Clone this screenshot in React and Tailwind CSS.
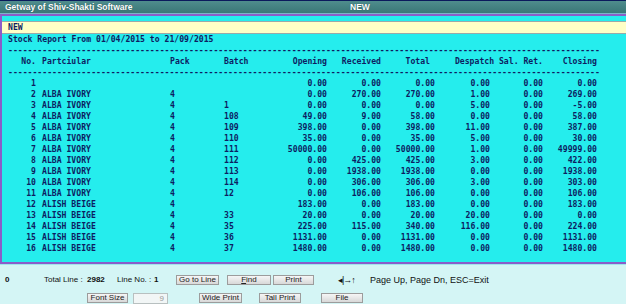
import React from "react";

const rows = [
  ["1", "", "", "", "0.00", "0.00", "0.00", "0.00", "0.00", "0.00"],
  ["2", "ALBA IVORY", "4", "", "0.00", "270.00", "270.00", "1.00", "0.00", "269.00"],
  ["3", "ALBA IVORY", "4", "1", "0.00", "0.00", "0.00", "5.00", "0.00", "-5.00"],
  ["4", "ALBA IVORY", "4", "108", "49.00", "9.00", "58.00", "0.00", "0.00", "58.00"],
  ["5", "ALBA IVORY", "4", "109", "398.00", "0.00", "398.00", "11.00", "0.00", "387.00"],
  ["6", "ALBA IVORY", "4", "110", "35.00", "0.00", "35.00", "5.00", "0.00", "30.00"],
  ["7", "ALBA IVORY", "4", "111", "50000.00", "0.00", "50000.00", "1.00", "0.00", "49999.00"],
  ["8", "ALBA IVORY", "4", "112", "0.00", "425.00", "425.00", "3.00", "0.00", "422.00"],
  ["9", "ALBA IVORY", "4", "113", "0.00", "1938.00", "1938.00", "0.00", "0.00", "1938.00"],
  ["10", "ALBA IVORY", "4", "114", "0.00", "306.00", "306.00", "3.00", "0.00", "303.00"],
  ["11", "ALBA IVORY", "4", "12", "0.00", "106.00", "106.00", "0.00", "0.00", "106.00"],
  ["12", "ALISH BEIGE", "4", "", "183.00", "0.00", "183.00", "0.00", "0.00", "183.00"],
  ["13", "ALISH BEIGE", "4", "33", "20.00", "0.00", "20.00", "20.00", "0.00", "0.00"],
  ["14", "ALISH BEIGE", "4", "35", "225.00", "115.00", "340.00", "116.00", "0.00", "224.00"],
  ["15", "ALISH BEIGE", "4", "36", "1131.00", "0.00", "1131.00", "0.00", "0.00", "1131.00"],
  ["16", "ALISH BEIGE", "4", "37", "1480.00", "0.00", "1480.00", "0.00", "0.00", "1480.00"],
];

const DASHES = "-".repeat(121);

function Btn({ children, w }) {
  return (
    <div
      className={`${w} h-[10px] border border-[#9c9c9c] bg-gradient-to-b from-[#f6f6f6] to-[#d8d8d8] flex items-center justify-center text-[8px] leading-[8px] text-[#222]`}
    >
      {children}
    </div>
  );
}

export default function App() {
  return (
    <div className="w-[626px] h-[304px] overflow-hidden flex flex-col bg-[#d4f5f5]">
      {/* title bar */}
      <div className="h-[13px] shrink-0 border-t border-[#0b1a5c] bg-gradient-to-b from-[#4f8d8d] to-[#3a7777] flex items-center text-white font-bold text-[8.5px] leading-[12px] [font-family:'Liberation_Sans',Arial,sans-serif] [text-shadow:0_0_1px_#1d4a4a]">
        <span className="ml-[5px] w-[345px]">Getway of Shiv-Shakti Software</span>
        <span>NEW</span>
      </div>
      <div className="h-[1px] shrink-0 bg-[#7bb3c8]" />
      <div className="h-[2px] shrink-0 bg-[#8a5dc9]" />

      {/* main cyan area */}
      <div className="h-[246px] shrink-0 bg-[#25eded] border-l-2 border-[#8a5dc9] flex flex-col pt-[5px] text-[#0d1d62] font-bold text-[8.13px] leading-[11px] [font-family:'DejaVu_Sans_Mono',monospace]">
        <div className="h-[13px] bg-[#ffffc6] border-y border-[#9aa9a9] flex items-center pl-[6px]">
          NEW
        </div>
        <div className="h-[11px] pl-[6px] whitespace-pre">Stock Report From 01/04/2015 to 21/09/2015</div>
        <div className="h-[11px] pl-[6px] w-[597px] overflow-hidden whitespace-pre">{DASHES}</div>
        <div className="h-[11px] flex whitespace-pre">
          <div className="w-[34px] text-right">No.</div>
          <div className="ml-[6px] w-[128px]">Partciular</div>
          <div className="w-[54px]">Pack</div>
          <div className="w-[48px]">Batch</div>
          <div className="w-[55px] text-right">Opening</div>
          <div className="w-[54px] text-right">Received</div>
          <div className="w-[54px] text-right pr-[5px]">Total</div>
          <div className="w-[108px] text-right">Despatch Sal. Ret.</div>
          <div className="w-[54px] text-right">Closing</div>
        </div>
        <div className="h-[11px] pl-[6px] w-[597px] overflow-hidden whitespace-pre">{DASHES}</div>
        {rows.map((r) => (
          <div key={r[0]} className="h-[11px] flex whitespace-pre">
            <div className="w-[34px] text-right">{r[0]}</div>
            <div className="ml-[6px] w-[128px]">{r[1]}</div>
            <div className="w-[54px]">{r[2]}</div>
            <div className="w-[48px]">{r[3]}</div>
            <div className="w-[55px] text-right">{r[4]}</div>
            <div className="w-[54px] text-right">{r[5]}</div>
            <div className="w-[54px] text-right">{r[6]}</div>
            <div className="w-[55px] text-right">{r[7]}</div>
            <div className="w-[53px] text-right">{r[8]}</div>
            <div className="w-[54px] text-right">{r[9]}</div>
          </div>
        ))}
      </div>
      <div className="h-[2px] shrink-0 bg-[#8a5dc9]" />
      <div className="h-[1px] shrink-0 bg-[#9fe6ec]" />

      {/* bottom panel */}
      <div className="flex-1 flex flex-col pt-[10px] gap-[8px] text-[8px] leading-[10px] text-[#111] [font-family:'Liberation_Sans',Arial,sans-serif]">
        <div className="h-[10px] flex items-center">
          <span className="ml-[5px] w-[39px] font-bold">0</span>
          <span className="w-[43px]">Total Line :</span>
          <span className="w-[30px] font-bold">2982</span>
          <span className="w-[37px]">Line No. :</span>
          <span className="w-[22px] font-bold">1</span>
          <Btn w="w-[43px]">Go to Line</Btn>
          <div className="w-[8px]" />
          <Btn w="w-[44px]">
            <span className="underline">F</span>ind
          </Btn>
          <div className="w-[2px]" />
          <Btn w="w-[41px]">Print</Btn>
          <span className="ml-[24px] w-[32px] text-[9px] tracking-[-1px]">◂|→↑</span>
          <span className="text-[9px]">Page Up, Page Dn, ESC=Exit</span>
        </div>
        <div className="h-[10px] flex items-center">
          <div className="ml-[87px]">
            <Btn w="w-[41px]">Font Size</Btn>
          </div>
          <div className="ml-[5px] w-[35px] h-[11px] border border-[#b8c0c0] bg-[#f2f6f6] text-right pr-[3px] text-[8px] leading-[9px] text-[#999]">
            9
          </div>
          <div className="ml-[31px]">
            <Btn w="w-[43px]">Wide Print</Btn>
          </div>
          <div className="ml-[17px]">
            <Btn w="w-[42px]">Tall Print</Btn>
          </div>
          <div className="ml-[20px]">
            <Btn w="w-[42px]">File</Btn>
          </div>
        </div>
      </div>
    </div>
  );
}
